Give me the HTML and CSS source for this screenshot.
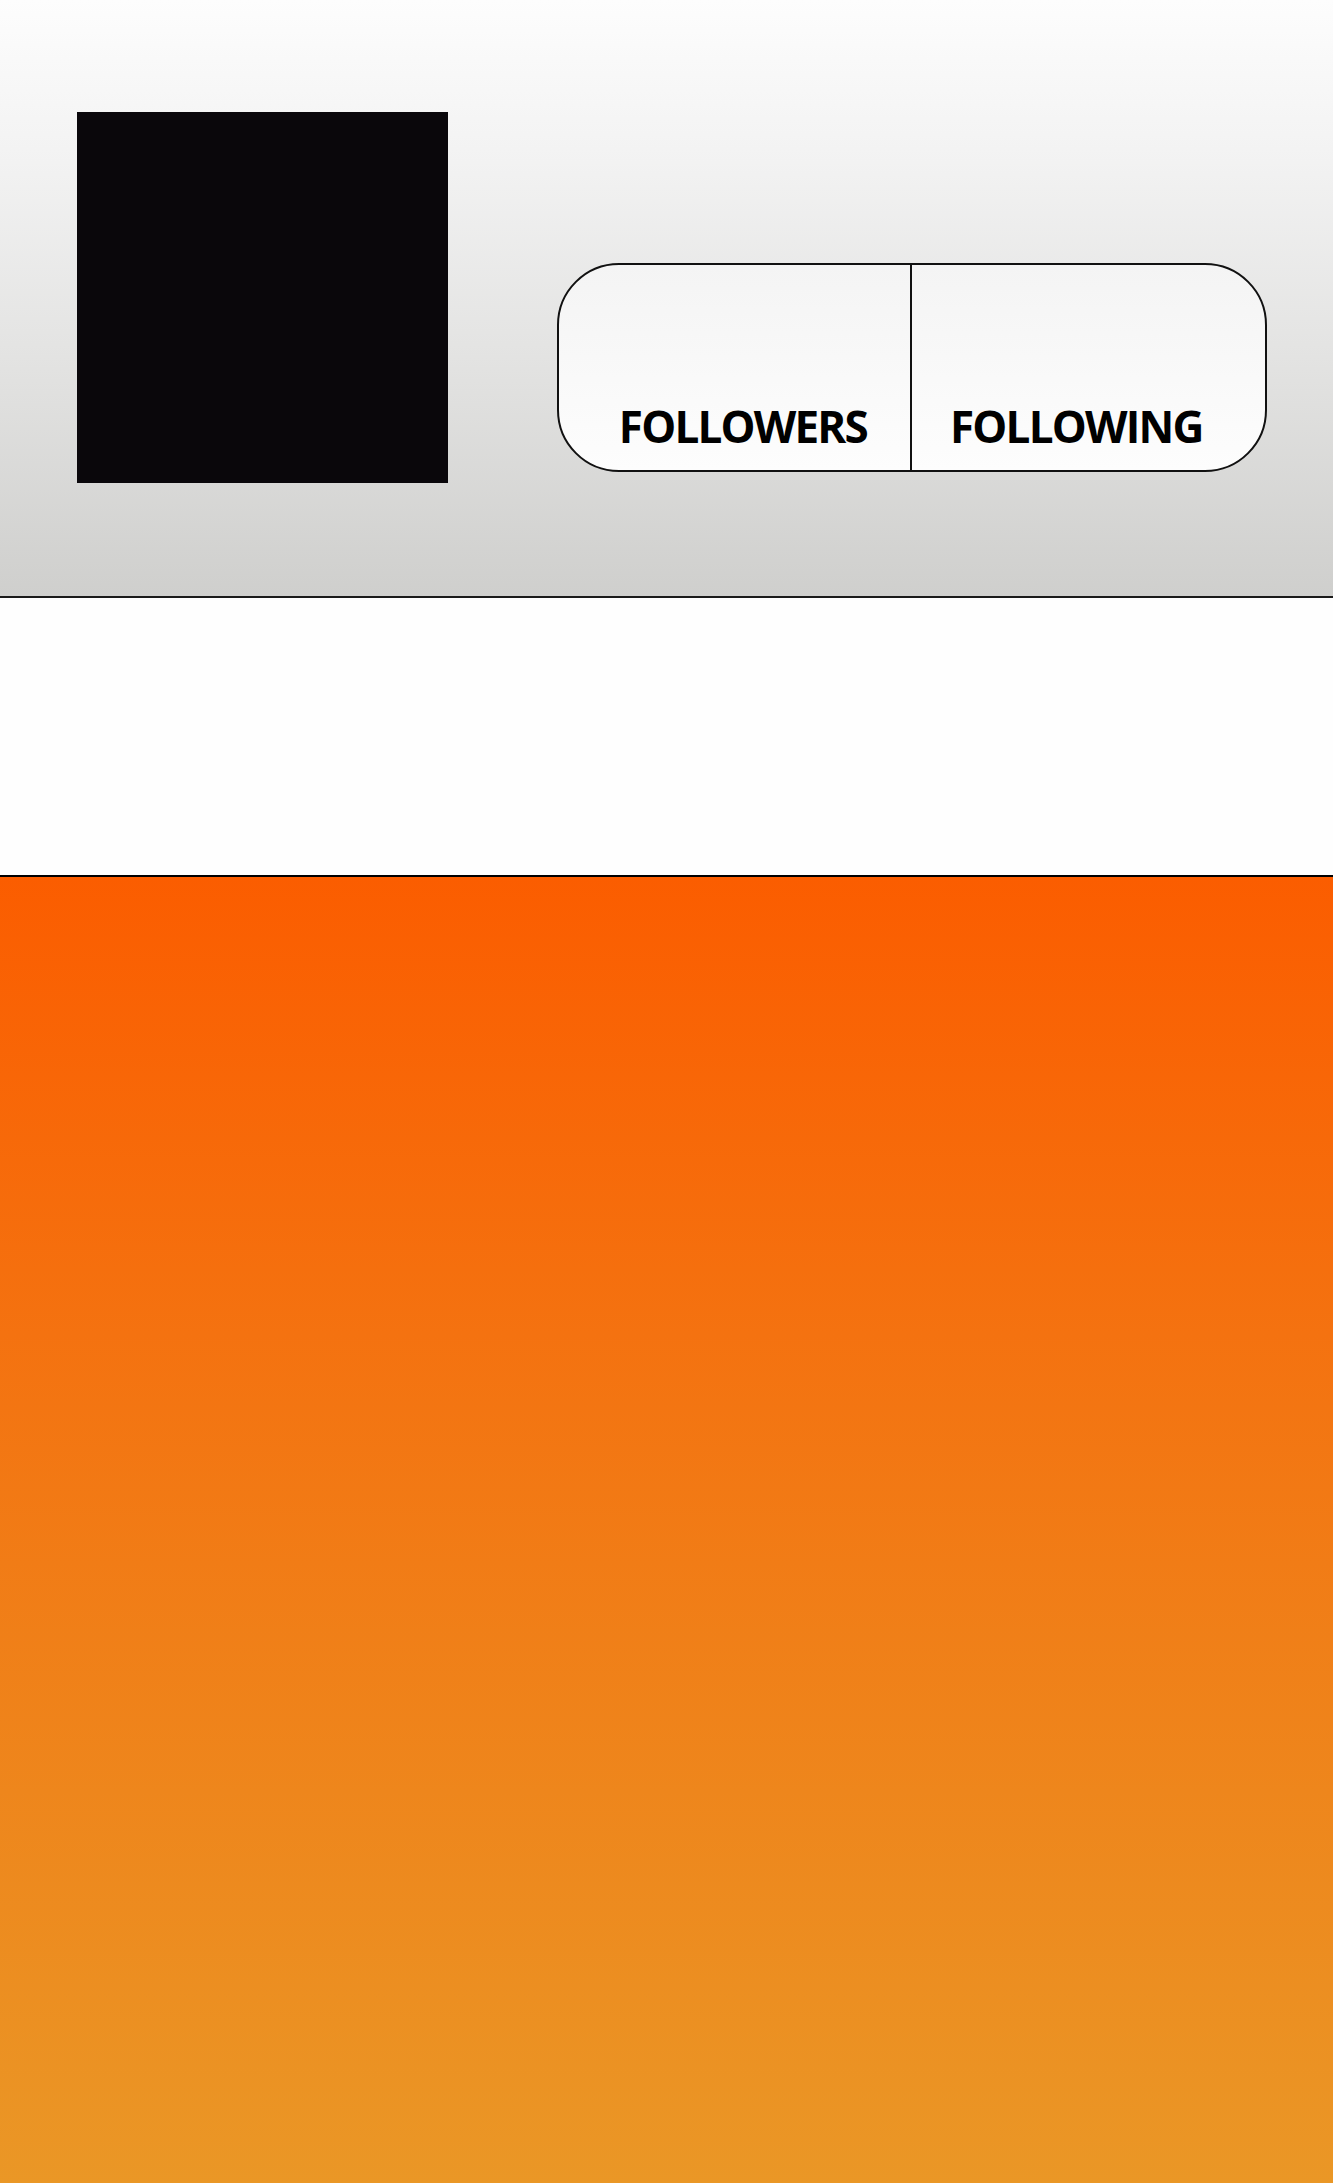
FILE: index.html
```html
<!DOCTYPE html>
<html>
<head>
<meta charset="utf-8">
<link rel="stylesheet" href="styles.css">
</head>
<body>
<header class="profile-header">
  <div class="avatar"></div>
  <div class="stats">
    <div class="stat stat-left"><span class="stat-label">FOLLOWERS</span></div>
    <div class="stat stat-right"><span class="stat-label">FOLLOWING</span></div>
  </div>
</header>
<section class="blank"></section>
<section class="feed"></section>
</body>
</html>
```
FILE: styles.css
```css
html, body {
  margin: 0;
  padding: 0;
}
body {
  width: 1333px;
  font-family: "Open Sans", "Liberation Sans", sans-serif;
}
.profile-header {
  box-sizing: border-box;
  height: 598px;
  display: flex;
  align-items: flex-start;
  padding-left: 77px;
  background: linear-gradient(to bottom, #fdfdfd 0%, #f3f3f3 25%, #e3e3e2 60%, #cfcfcd 100%);
  border-bottom: 2px solid #1a1a1a;
}
.avatar {
  width: 371px;
  height: 371px;
  margin-top: 112px;
  background: #0a070b;
}
.stats {
  box-sizing: border-box;
  margin-top: 263px;
  margin-left: 109px;
  width: 710px;
  height: 209px;
  border: 2px solid #111;
  border-radius: 62px;
  display: flex;
  background: linear-gradient(to bottom, #f4f4f4, #fdfdfd);
}
.stat {
  box-sizing: border-box;
  flex: 0 0 50%;
  display: flex;
  align-items: flex-end;
  padding-bottom: 22px;
}
.stat-left {
  justify-content: flex-end;
  padding-right: 43px;
  border-right: 2px solid #111;
}
.stat-right {
  justify-content: flex-start;
  padding-left: 38px;
}
.stat-label {
  font-size: 44px;
  font-weight: 700;
  line-height: 1;
  color: #000;
  letter-spacing: -1.8px;
}
.blank {
  box-sizing: border-box;
  height: 279px;
  background: #fefefe;
  border-bottom: 2px solid #000;
}
.feed {
  height: 1306px;
  background: linear-gradient(to bottom, #fb5d00 0%, #f47210 35%, #ee861c 70%, #ea9726 100%);
}
```
